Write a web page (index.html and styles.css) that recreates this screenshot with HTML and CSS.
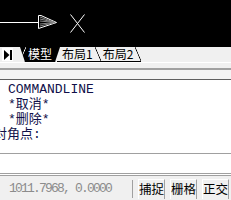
FILE: index.html
```html
<!DOCTYPE html>
<html>
<head>
<meta charset="utf-8">
<link rel="stylesheet" href="styles.css">
</head>
<body>
<div class="app">
  <div class="canvas">
    <svg class="ucs" width="100" height="47" viewBox="0 0 100 47">
      <line x1="0" y1="22.5" x2="38" y2="22.5" stroke="#fff" stroke-width="1"/>
      <path d="M38.5 15.5 L41 15.5 L56.5 22.5 L38.5 28.5 Z" fill="none" stroke="#fff" stroke-width="1"/>
      <path d="M40 17 L55 22.5 M40 19 L55 22.5 M40 21 L55 22.5 M40 24 L55 22.5 M40 26 L55 22.5" stroke="#8a8a8a" stroke-width="1"/>
      <path d="M70.5 14.5 L84.5 32.5 M84.5 14.5 L70.5 32.5" stroke="#fff" stroke-width="1"/>
    </svg>
  </div>
  <div class="tabbar">
    <div class="navbtn">
      <svg width="11" height="12" viewBox="0 0 11 12"><path d="M2 1 L7.5 6 L2 11 Z" fill="#000"/><rect x="8" y="1" width="2" height="10" fill="#000"/></svg>
    </div>
    <div class="tab active">模型</div>
    <div class="tab t1">布局1</div>
    <div class="tab t2">布局2</div>
    <div class="tabrest"></div>
  </div>
  <div class="splitter"></div>
  <div class="gap"></div>
  <div class="cmd">
    <div class="line">COMMANDLINE</div>
    <div class="line">*取消*</div>
    <div class="line">*删除*</div>
    <div class="line cut">对角点:</div>
  </div>
  <div class="cmdinput"></div>
  <div class="status">
    <div class="coords">1011.7968, 0.0000</div>
    <div class="sbtn">捕捉</div>
    <div class="sbtn">栅格</div>
    <div class="sbtn">正交</div>
  </div>
</div>
</body>
</html>
```
FILE: styles.css
```css
html, body {
  margin: 0;
  padding: 0;
  background: #ffffff;
}
.app {
  width: 231px;
  height: 200px;
  overflow: hidden;
  display: flex;
  flex-direction: column;
}
.canvas {
  height: 47px;
  background: #000;
  flex: none;
}
.ucs {
  display: block;
}
.tabbar {
  height: 15px;
  flex: none;
  display: flex;
  background: #f0f0f0;
  font-family: "Noto Sans CJK SC", sans-serif;
  font-size: 12px;
  line-height: 14px;
  border-bottom: 1px solid #ffffff;
}
.navbtn {
  width: 11px;
  height: 13px;
  margin: 1px 0 0 2px;
  background: #fff;
  display: flex;
  align-items: center;
  justify-content: center;
}
.tab {
  position: relative;
  color: #000;
  white-space: nowrap;
  border-bottom: 1px solid #000;
  background: linear-gradient(to top right, transparent calc(50% - 0.7px), #000 50%, transparent calc(50% + 0.7px)) right top / 6px 100% no-repeat, #f0f0f0;
}
.tab.active {
  margin-left: 7px;
  margin-right: -3px;
  padding: 0 8px;
  color: #fff;
  border-bottom: 1px solid #000;
  background: #000;
  clip-path: polygon(0 0, 100% 0, calc(100% - 5px) 100%, 5px 100%);
  z-index: 2;
}
.tab.active::before {
  content: "";
  position: absolute;
  left: 0;
  top: 0;
  width: 6px;
  height: 100%;
  background: linear-gradient(to bottom right, transparent calc(50% - 0.7px), #fff 50%, transparent calc(50% + 0.7px));
}
.tab.t1 {
  padding: 0 8px 0 5px;
  margin-right: -2px;
  z-index: 1;
}
.tab.t2 {
  padding: 0 8px 0 4px;
}
.tabrest {
  flex: 1;
}
.splitter {
  height: 5px;
  flex: none;
  background: #f0f0f0;
  border-bottom: 2px solid #a0a0a0;
}
.gap {
  height: 9px;
  flex: none;
  background: #f4f4f4;
  border-bottom: 1px solid #606060;
}
.cmd {
  height: 74px;
  flex: none;
  background: #fff;
  border-bottom: 1px solid #a0a0a0;
  font-family: "Liberation Mono", "Noto Sans CJK SC", monospace;
  font-size: 13px;
  line-height: 15px;
  color: #10104a;
  padding-top: 2px;
  box-sizing: border-box;
  overflow: hidden;
}
.line {
  padding-left: 8px;
  white-space: nowrap;
}
.line.cut {
  padding-left: 0;
  margin-left: -6px;
}
.cmdinput {
  height: 19px;
  flex: none;
  background: #fff;
  border-bottom: 1px solid #a0a0a0;
}
.status {
  flex: 1;
  border-top: 1px solid #a0a0a0;
  margin-top: 1px;
  background: #f0f0f0;
  display: flex;
  align-items: flex-start;
  padding-top: 3px;
}
.coords {
  width: 133px;
  height: 18px;
  box-sizing: border-box;
  border-right: 1px solid #a0a0a0;
  font-family: "Liberation Mono", monospace;
  font-size: 13px;
  letter-spacing: -1.8px;
  color: #8c8c8c;
  padding-left: 9px;
  line-height: 17px;
  margin-top: 1px;
  white-space: nowrap;
}
.sbtn {
  margin-left: 5px;
  width: 27px;
  height: 20px;
  box-sizing: border-box;
  border-top: 1px solid #fff;
  border-left: 1px solid #fff;
  border-right: 1px solid #a0a0a0;
  font-family: "Noto Sans CJK SC", sans-serif;
  font-size: 12.5px;
  line-height: 18px;
  text-align: center;
  color: #000;
  white-space: nowrap;
  overflow: visible;
}
```
